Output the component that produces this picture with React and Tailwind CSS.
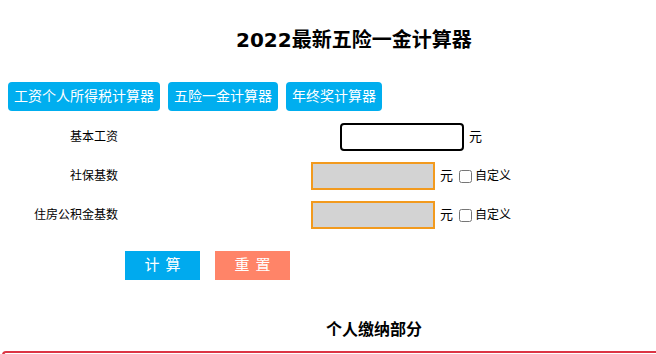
import React, { useState } from "react";

const font = { fontFamily: '"DejaVu Sans", "Noto Sans CJK SC", sans-serif' };

const navLinks = ["工资个人所得税计算器", "五险一金计算器", "年终奖计算器"];

const App = () => {
  const [salary, setSalary] = useState("");
  const [customShebao, setCustomShebao] = useState(false);
  const [customGjj, setCustomGjj] = useState(false);

  return (
    <div className="w-[656px] h-[354px] overflow-hidden bg-white text-black" style={font}>
      {/* Title */}
      <h1 className="pt-[25px] pl-[236px] text-[20px] leading-[30px] font-bold">
        2022最新五险一金计算器
      </h1>

      {/* Calculator links */}
      <div className="flex gap-2 pl-2 mt-[27px]">
        {navLinks.map((name) => (
          <a
            key={name}
            href="#"
            className="h-[29px] px-[6px] rounded-[4px] bg-[#00aeef] text-white text-[14px] leading-[29px] whitespace-nowrap"
          >
            {name}
          </a>
        ))}
      </div>

      {/* Form */}
      <div className="grid grid-cols-[118px_1fr] gap-x-[48px] mt-[12px] text-[12px]">
        <div className="h-[27px] flex items-center justify-end">基本工资</div>
        <div className="h-[27px] flex items-center justify-center">
          <input
            value={salary}
            onChange={(e) => setSalary(e.target.value)}
            className="w-[124px] h-[28px] border-2 border-black rounded-[4px] bg-white outline-none"
          />
          <span className="ml-[5px] text-[13px]">元</span>
        </div>

        <div className="h-[28px] mt-[12px] flex items-center justify-end">社保基数</div>
        <div className="h-[28px] mt-[12px] flex items-center justify-center">
          <input
            disabled={!customShebao}
            className="w-[124px] h-[28px] border-2 border-[#f29a1e] bg-[#d3d3d3] outline-none"
          />
          <span className="ml-[5px] text-[13px]">元</span>
          <label className="ml-[6px] flex items-center">
            <input
              type="checkbox"
              checked={customShebao}
              onChange={(e) => setCustomShebao(e.target.checked)}
              className="w-[13px] h-[13px] m-0 mr-[3px]"
            />
            自定义
          </label>
        </div>

        <div className="h-[28px] mt-[11px] flex items-center justify-end">住房公积金基数</div>
        <div className="h-[28px] mt-[11px] flex items-center justify-center">
          <input
            disabled={!customGjj}
            className="w-[124px] h-[28px] border-2 border-[#f29a1e] bg-[#d3d3d3] outline-none"
          />
          <span className="ml-[5px] text-[13px]">元</span>
          <label className="ml-[6px] flex items-center">
            <input
              type="checkbox"
              checked={customGjj}
              onChange={(e) => setCustomGjj(e.target.checked)}
              className="w-[13px] h-[13px] m-0 mr-[3px]"
            />
            自定义
          </label>
        </div>
      </div>

      {/* Actions */}
      <div className="flex gap-[15px] pl-[125px] mt-[22px]">
        <button className="w-[75px] h-[29px] bg-[#00aaee] text-white text-[15px] tracking-[6px] pl-[6px]">
          计算
        </button>
        <button
          onClick={() => setSalary("")}
          className="w-[75px] h-[29px] bg-[#ff8468] text-white text-[15px] tracking-[6px] pl-[6px]"
        >
          重置
        </button>
      </div>

      {/* Personal contribution section */}
      <h2 className="mt-[38px] pl-[326px] text-[16px] leading-[24px] font-bold">个人缴纳部分</h2>
      <div className="mt-[9px] ml-[2px] w-[700px] h-[20px] border-t-2 border-l-2 border-[#dc3545] rounded-tl-[4px]" />
    </div>
  );
};

export default App;
